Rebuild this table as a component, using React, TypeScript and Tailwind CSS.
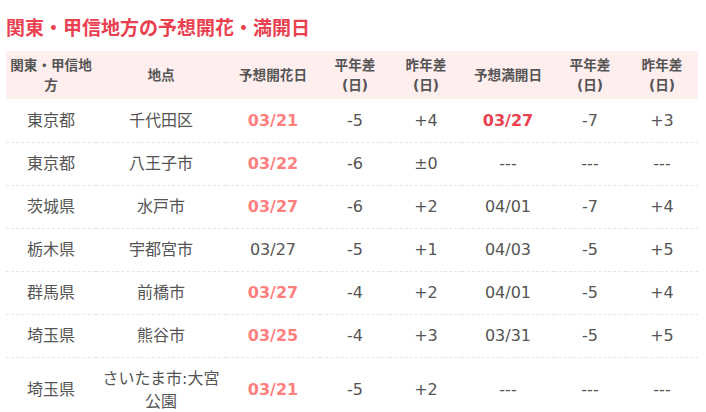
import React from "react";

type Cell = { t: string; k?: "pink" | "red" };
const rows: Cell[][] = [
  [{ t: "東京都" }, { t: "千代田区" }, { t: "03/21", k: "pink" }, { t: "-5" }, { t: "+4" }, { t: "03/27", k: "red" }, { t: "-7" }, { t: "+3" }],
  [{ t: "東京都" }, { t: "八王子市" }, { t: "03/22", k: "pink" }, { t: "-6" }, { t: "±0" }, { t: "---" }, { t: "---" }, { t: "---" }],
  [{ t: "茨城県" }, { t: "水戸市" }, { t: "03/27", k: "pink" }, { t: "-6" }, { t: "+2" }, { t: "04/01" }, { t: "-7" }, { t: "+4" }],
  [{ t: "栃木県" }, { t: "宇都宮市" }, { t: "03/27" }, { t: "-5" }, { t: "+1" }, { t: "04/03" }, { t: "-5" }, { t: "+5" }],
  [{ t: "群馬県" }, { t: "前橋市" }, { t: "03/27", k: "pink" }, { t: "-4" }, { t: "+2" }, { t: "04/01" }, { t: "-5" }, { t: "+4" }],
  [{ t: "埼玉県" }, { t: "熊谷市" }, { t: "03/25", k: "pink" }, { t: "-4" }, { t: "+3" }, { t: "03/31" }, { t: "-5" }, { t: "+5" }],
  [{ t: "埼玉県" }, { t: "さいたま市:大宮公園" }, { t: "03/21", k: "pink" }, { t: "-5" }, { t: "+2" }, { t: "---" }, { t: "---" }, { t: "---" }],
];

const widths = [90, 130, 94, 70, 72, 92, 72, 72];

export default function App() {
  return (
    <div className="w-[706px] h-[412px] overflow-hidden bg-white px-[6px] [font-family:'DejaVu_Sans','Noto_Sans_CJK_JP',sans-serif] text-[#555]">
      <div className="pt-[14px] pb-[9px] h-[51px] text-[19px] leading-[28px] font-bold text-[#ea4150]">
        関東・甲信地方の予想開花・満開日
      </div>
      <table className="w-[692px] table-fixed border-collapse">
        <colgroup>
          {widths.map((w, i) => (
            <col key={i} style={{ width: w }} />
          ))}
        </colgroup>
        <thead>
          <tr className="bg-[#ffeeee] h-[48px]">
            {["関東・甲信地方", "地点", "予想開花日", "平年差\n(日)", "昨年差\n(日)", "予想満開日", "平年差\n(日)", "昨年差\n(日)"].map((h, i) => (
              <th key={i} className="px-[4px] py-[4px] text-[13.6px] leading-[20px] font-bold text-[#555] text-center align-middle whitespace-pre-line">
                {h}
              </th>
            ))}
          </tr>
        </thead>
        <tbody>
          {rows.map((r, ri) => (
            <tr key={ri} className="border-b border-dashed border-[#e6e6e6]">
              {r.map((c, ci) => (
                <td
                  key={ci}
                  className={
                    "h-[43px] px-[4px] py-[9px] text-center align-middle leading-[23px] " +
                    (c.k === "pink"
                      ? "text-[16px] font-bold text-[#ff7f7f]"
                      : c.k === "red"
                      ? "text-[16px] font-bold text-[#ea4150]"
                      : "text-[16px]")
                  }
                >
                  {c.t}
                </td>
              ))}
            </tr>
          ))}
        </tbody>
      </table>
    </div>
  );
}
